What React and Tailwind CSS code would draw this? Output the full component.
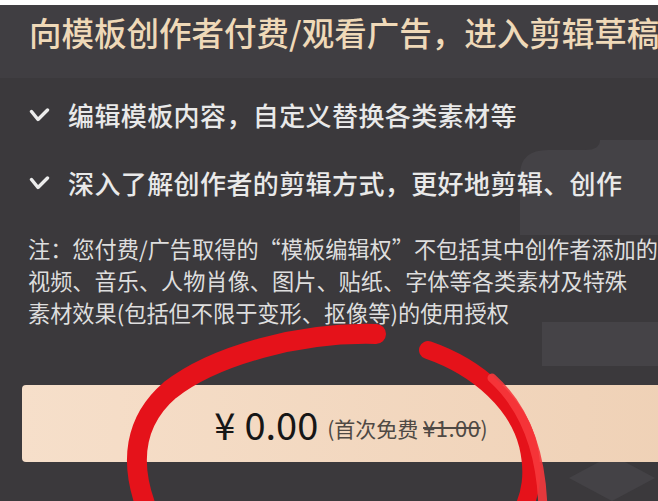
import React from 'react';

const items = ['编辑模板内容，自定义替换各类素材等', '深入了解创作者的剪辑方式，更好地剪辑、创作'];

const noteLines = [
  '注：您付费/广告取得的“模板编辑权”不包括其中创作者添加的',
  '视频、音乐、人物肖像、图片、贴纸、字体等各类素材及特殊',
  '素材效果(包括但不限于变形、抠像等)的使用授权',
];

const Tick = () => (
  <svg width="21" height="15" viewBox="0 0 21 15" className="shrink-0">
    <polyline
      points="2.5,3.5 9,11.5 18.5,2"
      fill="none"
      stroke="#ececec"
      strokeWidth="3.4"
      strokeLinecap="round"
      strokeLinejoin="round"
    />
  </svg>
);

// faint shapes of the screen behind, seen through the dim layer
const Backdrop = () => (
  <svg className="absolute inset-0" width="658" height="501" viewBox="0 0 658 501">
    <rect x="0" y="0" width="658" height="78" fill="#403e42" />
    <path d="M520 235 L520 175 Q520 150 548 150 L585 150 Q600 150 600 140 L658 140 L658 235 Z" fill="#444246" />
    <rect x="542" y="322" width="116" height="44" fill="#454347" />
    <path d="M612 455 L655 478 L612 501 L569 478 Z" fill="#444246" />
  </svg>
);

// the red hand-drawn loop round the price
const Scribble = () => (
  <svg className="absolute inset-0 pointer-events-none" width="658" height="501" viewBox="0 0 658 501">
    <path
      d="M376 334 C300 332, 215 355, 170 390 C135 420, 128 462, 148 512"
      fill="none"
      stroke="#e5121a"
      strokeWidth="20"
      strokeLinecap="round"
    />
    <path
      d="M428 350 C480 368, 518 405, 528 445 C535 475, 530 495, 522 512"
      fill="none"
      stroke="#e5121a"
      strokeWidth="18"
      strokeLinecap="round"
    />
    <path
      d="M492 378 C522 405, 542 448, 543 512"
      fill="none"
      stroke="#f6383c"
      strokeWidth="9"
      strokeLinecap="round"
      opacity="0.9"
    />
  </svg>
);

export default function App() {
  return (
    <div className="relative w-[658px] h-[501px] overflow-hidden bg-[#3b393c] font-['Noto_Sans_CJK_SC',sans-serif]">
      <Backdrop />
      <div className="relative h-[5px] bg-white" />

      <div className="relative pl-[29px] pt-[7px] whitespace-nowrap text-[32.5px] leading-[40px] font-medium text-[#efd9b8]">
        向模板创作者付费/观看广告，进入剪辑草稿
      </div>

      <ul className="relative mt-[45px] flex flex-col gap-[32px]">
        {items.map((t) => (
          <li key={t} className="flex items-center h-[36px] pl-[29px] whitespace-nowrap">
            <Tick />
            <span className="ml-[18px] text-[26px] leading-[36px] font-medium text-[#e9e9e9] tracking-[0.4px]">{t}</span>
          </li>
        ))}
      </ul>

      <div className="relative mt-[31px] pl-[28px] text-[22.2px] leading-[32px] text-[#dedede] whitespace-nowrap">
        {noteLines.map((l) => (
          <div key={l}>{l}</div>
        ))}
      </div>

      <div className="relative mt-[57px] ml-[22px] w-[658px] h-[77px] rounded-[4px] bg-gradient-to-r from-[#f6dfca] to-[#efd1b6] flex items-center justify-center whitespace-nowrap">
        <span className="text-[38px] leading-none text-[#161616]">
          ¥<span className="ml-[9px]">0.00</span>
        </span>
        <span className="ml-[9px] mt-[8px] text-[21px] leading-none text-[#4f4944]">
          (首次免费 <span className="line-through text-[22px] tracking-[0.5px]">¥1.00</span>)
        </span>
      </div>

      <Scribble />
    </div>
  );
}
